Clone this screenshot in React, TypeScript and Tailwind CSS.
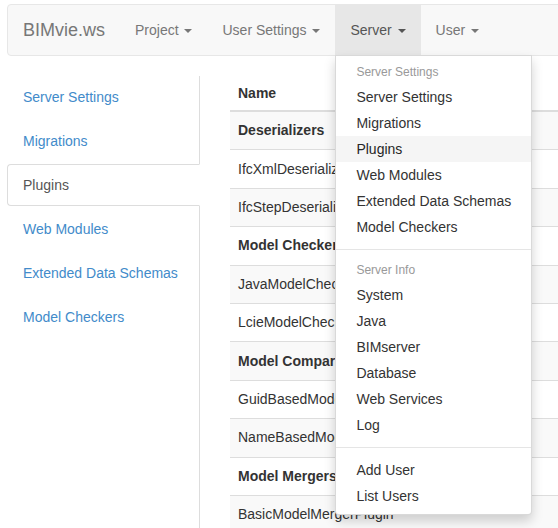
import React from 'react'

const sideLinks = ['Server Settings', 'Migrations', 'Plugins', 'Web Modules', 'Extended Data Schemas', 'Model Checkers']

const rows: { name: string; group?: boolean }[] = [
  { name: 'Deserializers', group: true },
  { name: 'IfcXmlDeserializerPlugin' },
  { name: 'IfcStepDeserializerPlugin' },
  { name: 'Model Checkers', group: true },
  { name: 'JavaModelCheckerPlugin' },
  { name: 'LcieModelCheckerPlugin' },
  { name: 'Model Compare', group: true },
  { name: 'GuidBasedModelCompare' },
  { name: 'NameBasedModelCompare' },
  { name: 'Model Mergers', group: true },
  { name: 'BasicModelMergerPlugin' },
]

function Caret() {
  return (
    <span className="ml-[2px] inline-block h-0 w-0 border-x-4 border-t-4 border-x-transparent border-t-current align-middle" />
  )
}

function NavItem({ label, active, children }: { label: string; active?: boolean; children?: React.ReactNode }) {
  return (
    <li
      className={
        'relative flex h-[50px] items-center px-[15px] leading-[20px] ' +
        (active ? 'bg-[#e7e7e7] text-[#555]' : 'text-[#777]')
      }
    >
      <span>
        {label} <Caret />
      </span>
      {children}
    </li>
  )
}

function Header({ children }: { children: string }) {
  return <li className="px-5 py-[3px] text-[12px] leading-[17px] text-[#999]">{children}</li>
}

function Item({ children, hover }: { children: string; hover?: boolean }) {
  return (
    <li className={'px-5 py-[3px] leading-[20px] ' + (hover ? 'bg-[#f5f5f5] text-[#262626]' : 'text-[#333]')}>
      {children}
    </li>
  )
}

function Divider() {
  return <li className="my-[9px] h-px bg-[#e5e5e5]" />
}

function ServerMenu() {
  return (
    <ul className="absolute left-0 top-full z-10 whitespace-nowrap rounded-b-[4px] border border-black/15 bg-white py-[5px] text-[14px] shadow-[0_6px_12px_rgba(0,0,0,0.175)]">
      <Header>Server Settings</Header>
      <Item>Server Settings</Item>
      <Item>Migrations</Item>
      <Item hover>Plugins</Item>
      <Item>Web Modules</Item>
      <Item>Extended Data Schemas</Item>
      <Item>Model Checkers</Item>
      <Divider />
      <Header>Server Info</Header>
      <Item>System</Item>
      <Item>Java</Item>
      <Item>BIMserver</Item>
      <Item>Database</Item>
      <Item>Web Services</Item>
      <Item>Log</Item>
      <Divider />
      <Item>Add User</Item>
      <Item>List Users</Item>
    </ul>
  )
}

export default function App() {
  return (
    <div className="h-[528px] w-[558px] overflow-hidden bg-white pl-[7px] pt-1 font-['Liberation_Sans',Arial,sans-serif] text-[14px] text-[#333]">
      {/* Navbar */}
      <nav className="-mr-3 flex h-[52px] rounded-[4px] border border-[#e7e7e7] bg-[#f8f8f8]">
        <div className="flex h-[50px] items-center px-[15px] text-[18px] text-[#777]">BIMvie.ws</div>
        <ul className="flex">
          <NavItem label="Project" />
          <NavItem label="User Settings" />
          <NavItem label="Server" active>
            <ServerMenu />
          </NavItem>
          <NavItem label="User" />
        </ul>
      </nav>

      <div className="mt-5 flex">
        {/* Side tabs */}
        <ul className="flex w-[193px] shrink-0 flex-col gap-[2px] border-r border-[#ddd]">
          {sideLinks.map((l) => (
            <li key={l}>
              <span
                className={
                  'block rounded-l-[4px] border px-[15px] py-[10px] leading-[20px] ' +
                  (l === 'Plugins'
                    ? '-mr-px border-[#ddd] border-r-transparent bg-white text-[#555]'
                    : 'border-transparent text-[#428bca]')
                }
              >
                {l}
              </span>
            </li>
          ))}
        </ul>

        {/* Plugins table */}
        <div className="ml-[30px] flex-1">
          <div className="flex h-[36px] items-center border-b-2 border-[#ddd] px-2 font-bold">Name</div>
          {rows.map((r, i) => (
            <div
              key={r.name}
              className={
                'flex h-[38.4px] items-center whitespace-nowrap border-b border-[#ddd] px-2 ' +
                (i % 2 === 0 ? 'bg-[#f9f9f9] ' : '') +
                (r.group ? 'font-bold' : '')
              }
            >
              {r.name}
            </div>
          ))}
        </div>
      </div>
    </div>
  )
}
